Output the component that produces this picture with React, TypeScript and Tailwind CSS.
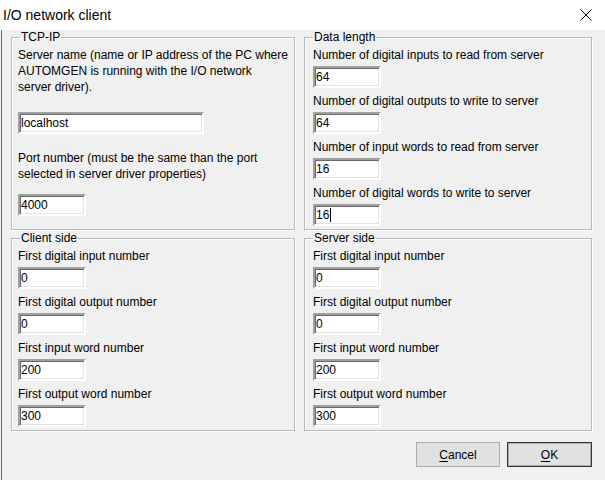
import type { ReactNode } from 'react';

const ui = "font-['Liberation_Sans',Arial,sans-serif]";

function TextBox({ value, width = 'w-[68px]', caret = false }: { value: string; width?: string; caret?: boolean }) {
	return (
		<div
			className={`${width} flex h-[22px] items-center border-2 border-t-[#a0a0a0] border-l-[#a0a0a0] border-r-white border-b-white bg-white pl-px text-[12px] leading-none text-black shadow-[inset_1px_1px_0_#696969,inset_-1px_-1px_0_#e3e3e3]`}
		>
			{value}
			{caret && <span className="ml-px inline-block h-[14px] w-px bg-black" />}
		</div>
	);
}

function Field({ label, value, caret }: { label: string; value: string; caret?: boolean }) {
	return (
		<div className="flex flex-col">
			<span className="h-4 whitespace-nowrap leading-4">{label}</span>
			<div className="mt-[3px]">
				<TextBox value={value} caret={caret} />
			</div>
		</div>
	);
}

function Group({ title, children, inset }: { title: string; children: ReactNode; inset: string }) {
	return (
		<fieldset className="h-[200px] min-w-0 border border-[#b9b9b9] shadow-[1px_1px_0_#fff,inset_1px_1px_0_#fff]">
			<legend className="ml-[8px] px-px text-[12px] leading-[15px]">{title}</legend>
			<div className={`${inset} pt-[2px]`}>{children}</div>
		</fieldset>
	);
}

function Button({ label, first, rest, primary }: { label: string; first: string; rest: string; primary?: boolean }) {
	return (
		<button
			type="button"
			aria-label={label}
			className={`flex h-[25px] items-center justify-center bg-[#e1e1e1] text-[12px] text-black ${
				primary ? 'w-[85px] border border-[#333] shadow-[inset_0_0_0_1px_#adadad]' : 'w-[84px] border border-[#adadad]'
			}`}
		>
			<span>
				<span className="underline underline-offset-2">{first}</span>
				{rest}
			</span>
		</button>
	);
}

export default function App() {
	return (
		<div className={`${ui} flex h-[480px] w-[605px] flex-col overflow-hidden bg-[#f0f0f0] text-[12px] text-black`}>
			{/* Title bar */}
			<div className="flex h-[30px] shrink-0 items-center justify-between bg-white pl-[3px] pr-[13px]">
				<span className="text-[14px] leading-none">I/O network client</span>
				<svg width="12" height="12" viewBox="0 0 12 12" className="mb-[1px]">
					<path d="M0.5 0.5 L11.5 11.5 M11.5 0.5 L0.5 11.5" stroke="#000" strokeWidth="1" fill="none" />
				</svg>
			</div>

			{/* Body */}
			<div className="flex flex-1 border-l border-[#f0f0f0]">
				<div className="flex flex-1 flex-col border-l border-[#2b79c2] pl-[9px] pr-[13px]">
					<div className="grid grid-cols-[284px_288px] gap-x-[9px] gap-y-px">
						<Group title="TCP-IP" inset="pl-[6px]">
							<p className="whitespace-nowrap leading-4">
								Server name (name or IP address of the PC where
								<br />
								AUTOMGEN is running with the I/O network
								<br />
								server driver).
							</p>
							<div className="mt-[17px]">
								<TextBox value="localhost" width="w-[186px]" />
							</div>
							<p className="mt-[16px] whitespace-nowrap leading-4">
								Port number (must be the same than the port
								<br />
								selected in server driver properties)
							</p>
							<div className="mt-[12px]">
								<TextBox value="4000" />
							</div>
						</Group>

						<Group title="Data length" inset="pl-[8px]">
							<div className="flex flex-col gap-[5px]">
								<Field label="Number of digital inputs to read from server" value="64" />
								<Field label="Number of digital outputs to write to server" value="64" />
								<Field label="Number of input words to read from server" value="16" />
								<Field label="Number of digital words to write to server" value="16" caret />
							</div>
						</Group>

						<Group title="Client side" inset="pl-[6px]">
							<div className="flex flex-col gap-[5px]">
								<Field label="First digital input number" value="0" />
								<Field label="First digital output number" value="0" />
								<Field label="First input word number" value="200" />
								<Field label="First output word number" value="300" />
							</div>
						</Group>

						<Group title="Server side" inset="pl-[8px]">
							<div className="flex flex-col gap-[5px]">
								<Field label="First digital input number" value="0" />
								<Field label="First digital output number" value="0" />
								<Field label="First input word number" value="200" />
								<Field label="First output word number" value="300" />
							</div>
						</Group>
					</div>

					<div className="mt-[11px] flex justify-end gap-[7px]">
						<Button label="Cancel" first="C" rest="ancel" />
						<Button label="OK" first="O" rest="K" primary />
					</div>
				</div>
			</div>
		</div>
	);
}
